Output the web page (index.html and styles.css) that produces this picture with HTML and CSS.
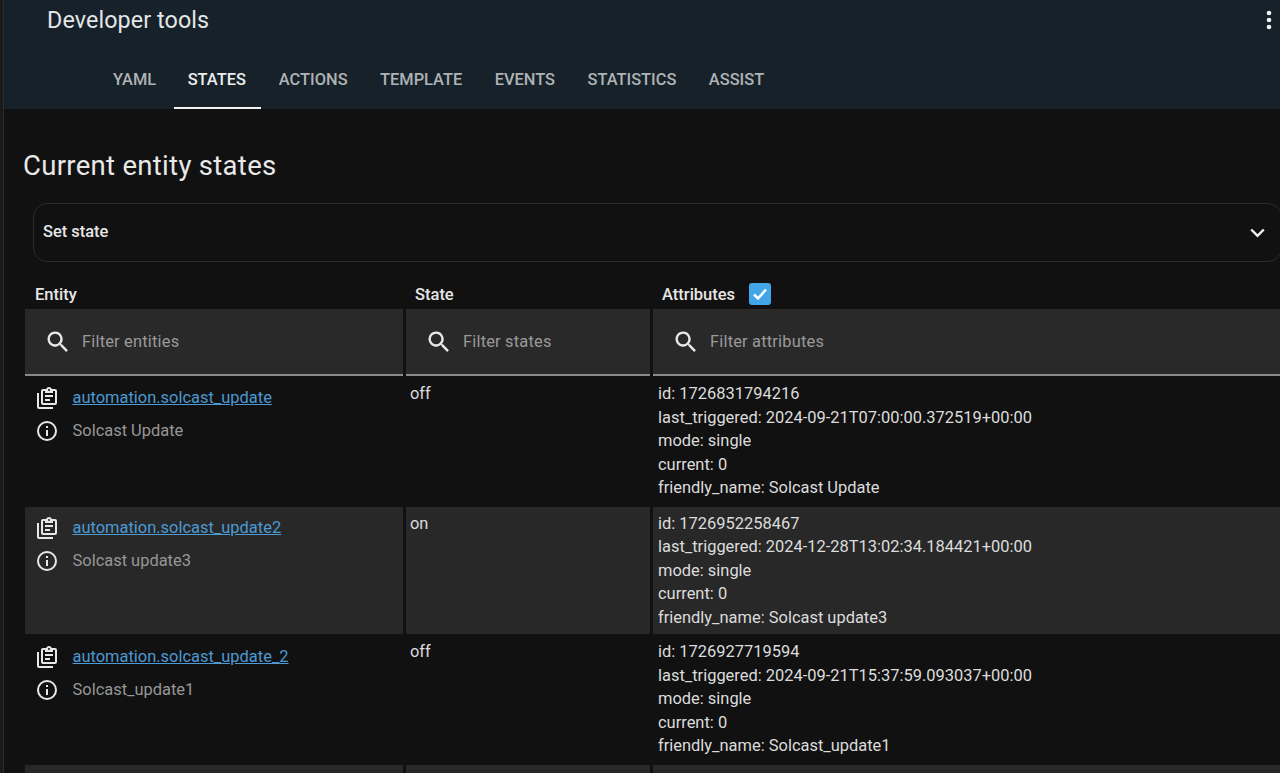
FILE: index.html
```html
<!DOCTYPE html>
<html lang="en">
<head>
<meta charset="utf-8">
<title>Developer tools</title>
<link rel="stylesheet" href="styles.css">
</head>
<body>
<div class="app">
  <div class="rail"></div>
  <div class="main">
    <header class="topbar">
      <div class="title-row">
        <h1 class="title">Developer tools</h1>
        <svg class="more" viewBox="0 0 6 20" width="6" height="20"><circle cx="3" cy="3" r="2.3"/><circle cx="3" cy="10" r="2.3"/><circle cx="3" cy="17" r="2.3"/></svg>
      </div>
      <nav class="tabs">
        <span class="tab">YAML</span>
        <span class="tab active">STATES</span>
        <span class="tab">ACTIONS</span>
        <span class="tab">TEMPLATE</span>
        <span class="tab">EVENTS</span>
        <span class="tab">STATISTICS</span>
        <span class="tab">ASSIST</span>
      </nav>
    </header>
    <section class="content">
      <h2 class="heading">Current entity states</h2>
      <div class="expander">
        <span class="expander-label">Set state</span>
        <svg class="chev" viewBox="0 0 15 10" width="15" height="10"><path d="M1.2 1.5 7.5 7.8l6.3-6.3" fill="none" stroke="#f2f2f2" stroke-width="2.4"/></svg>
      </div>
      <div class="table">
        <div class="th">Entity</div>
        <div class="th">State</div>
        <div class="th th-attr">Attributes
          <span class="check"><svg viewBox="0 0 22 22" width="22" height="22"><path d="M5 11.5l4 4 8-9" fill="none" stroke="#fff" stroke-width="2.5"/></svg></span>
        </div>

        <div class="filter"><svg class="search" viewBox="0 0 24 24" width="28" height="28"><path d="M9.5 3a6.5 6.5 0 0 1 4.94 10.73l.27.27h.79l5 5-1.5 1.5-5-5v-.79l-.27-.27A6.5 6.5 0 1 1 9.5 3m0 2a4.5 4.5 0 1 0 0 9 4.5 4.5 0 0 0 0-9z"/></svg><span>Filter entities</span></div>
        <div class="filter"><svg class="search" viewBox="0 0 24 24" width="28" height="28"><path d="M9.5 3a6.5 6.5 0 0 1 4.94 10.73l.27.27h.79l5 5-1.5 1.5-5-5v-.79l-.27-.27A6.5 6.5 0 1 1 9.5 3m0 2a4.5 4.5 0 1 0 0 9 4.5 4.5 0 0 0 0-9z"/></svg><span>Filter states</span></div>
        <div class="filter"><svg class="search" viewBox="0 0 24 24" width="28" height="28"><path d="M9.5 3a6.5 6.5 0 0 1 4.94 10.73l.27.27h.79l5 5-1.5 1.5-5-5v-.79l-.27-.27A6.5 6.5 0 1 1 9.5 3m0 2a4.5 4.5 0 1 0 0 9 4.5 4.5 0 0 0 0-9z"/></svg><span>Filter attributes</span></div>

        <div class="cell entity">
          <div class="line"><svg class="ico" viewBox="0 0 24 24" width="24" height="24"><path d="M4 7v14h14v2H4a2 2 0 0 1-2-2V7h2m16-4a2 2 0 0 1 2 2v12a2 2 0 0 1-2 2H8a2 2 0 0 1-2-2V5a2 2 0 0 1 2-2h3.18C11.6 1.84 12.7 1 14 1s2.4.84 2.82 2H20m-6 0a1 1 0 1 0 0 2 1 1 0 0 0 0-2m-4 4V5H8v12h12V5h-2v2h-8m0 2h8v2h-8V9m0 4h5v2h-5v-2z"/></svg><a class="link">automation.solcast_update</a></div>
          <div class="line"><svg class="ico" viewBox="0 0 24 24" width="24" height="24"><path d="M11 9h2V7h-2m1 13a8 8 0 1 1 0-16 8 8 0 0 1 0 16m0-18a10 10 0 1 0 0 20 10 10 0 0 0 0-20m-1 15h2v-6h-2v6z"/></svg><span class="name">Solcast Update</span></div>
        </div>
        <div class="cell state">off</div>
        <div class="cell attrs">id: 1726831794216<br>last_triggered: 2024-09-21T07:00:00.372519+00:00<br>mode: single<br>current: 0<br>friendly_name: Solcast Update</div>

        <div class="cell entity alt">
          <div class="line"><svg class="ico" viewBox="0 0 24 24" width="24" height="24"><path d="M4 7v14h14v2H4a2 2 0 0 1-2-2V7h2m16-4a2 2 0 0 1 2 2v12a2 2 0 0 1-2 2H8a2 2 0 0 1-2-2V5a2 2 0 0 1 2-2h3.18C11.6 1.84 12.7 1 14 1s2.4.84 2.82 2H20m-6 0a1 1 0 1 0 0 2 1 1 0 0 0 0-2m-4 4V5H8v12h12V5h-2v2h-8m0 2h8v2h-8V9m0 4h5v2h-5v-2z"/></svg><a class="link">automation.solcast_update2</a></div>
          <div class="line"><svg class="ico" viewBox="0 0 24 24" width="24" height="24"><path d="M11 9h2V7h-2m1 13a8 8 0 1 1 0-16 8 8 0 0 1 0 16m0-18a10 10 0 1 0 0 20 10 10 0 0 0 0-20m-1 15h2v-6h-2v6z"/></svg><span class="name">Solcast update3</span></div>
        </div>
        <div class="cell state alt">on</div>
        <div class="cell attrs alt">id: 1726952258467<br>last_triggered: 2024-12-28T13:02:34.184421+00:00<br>mode: single<br>current: 0<br>friendly_name: Solcast update3</div>

        <div class="cell entity entity-low">
          <div class="line"><svg class="ico" viewBox="0 0 24 24" width="24" height="24"><path d="M4 7v14h14v2H4a2 2 0 0 1-2-2V7h2m16-4a2 2 0 0 1 2 2v12a2 2 0 0 1-2 2H8a2 2 0 0 1-2-2V5a2 2 0 0 1 2-2h3.18C11.6 1.84 12.7 1 14 1s2.4.84 2.82 2H20m-6 0a1 1 0 1 0 0 2 1 1 0 0 0 0-2m-4 4V5H8v12h12V5h-2v2h-8m0 2h8v2h-8V9m0 4h5v2h-5v-2z"/></svg><a class="link">automation.solcast_update_2</a></div>
          <div class="line"><svg class="ico" viewBox="0 0 24 24" width="24" height="24"><path d="M11 9h2V7h-2m1 13a8 8 0 1 1 0-16 8 8 0 0 1 0 16m0-18a10 10 0 1 0 0 20 10 10 0 0 0 0-20m-1 15h2v-6h-2v6z"/></svg><span class="name">Solcast_update1</span></div>
        </div>
        <div class="cell state">off</div>
        <div class="cell attrs">id: 1726927719594<br>last_triggered: 2024-09-21T15:37:59.093037+00:00<br>mode: single<br>current: 0<br>friendly_name: Solcast_update1</div>

        <div class="cell alt stub"></div>
        <div class="cell alt stub"></div>
        <div class="cell alt stub"></div>
      </div>
    </section>
  </div>
</div>
</body>
</html>
```
FILE: styles.css
```css
* { box-sizing: border-box; }
html, body { margin: 0; height: 100%; overflow: hidden; background: #111111; }
body { font-family: Roboto, "Liberation Sans", sans-serif; color: #e3e3e3; }
.app { display: flex; width: 1280px; height: 773px; overflow: hidden; }
.rail { flex: 0 0 4px; background: #1a1a1a; border-right: 1px solid #2c2c2c; }
.main { flex: 1; min-width: 0; }
.topbar { height: 109px; background: #172129; display: flex; flex-direction: column; }
.title-row { height: 41px; padding: 0 8px 0 43px; display: flex; justify-content: space-between; align-items: flex-start; }
.title { margin: 6px 0 0; font-size: 23.3px; line-height: 28px; font-weight: 400; color: #e4e6e7; letter-spacing: 0.1px; }
.more { fill: #f1f1f1; margin-top: 10px; }
.tabs { display: flex; padding-left: 93px; height: 68px; }
.tab { padding: 0 16.5px 0 16px; font-size: 16.4px; font-weight: 500; line-height: 77px; color: #aeb3b6; letter-spacing: 0; }
.tab:first-child { padding-right: 16px; }
.tab.active { color: #eceeee; border-bottom: 2px solid #f2f2f2; height: 68px; margin: 0 2px 0 2px; padding: 0 15px 0 13.5px; }
.content { padding: 0 0 0 19px; }
.heading { margin: 0; padding-top: 42px; font-size: 27.5px; line-height: 30px; font-weight: 400; color: #e8e8e8; letter-spacing: 0.3px; height: 94px; }
.expander { margin-left: 10px; width: 1249px; height: 59px; border: 1px solid #2d2d2d; border-radius: 14px; display: flex; align-items: center; justify-content: space-between; padding: 0 16px 0 9px; font-size: 16.4px; font-weight: 500; color: #e6e6e6; }
.expander-label { margin-bottom: 2px; }
.table { margin: 22px 0 0 2px; display: grid; grid-template-columns: 378px 244px 640px; grid-template-rows: 25px 67px 131px 127px 131px 20px; column-gap: 3px; }
.th { font-size: 16.5px; font-weight: 500; color: #e6e6e6; padding-left: 10px; display: flex; align-items: center; height: 20px; }
.th:nth-child(2) { padding-left: 9px; }
.th-attr { gap: 14px; padding-left: 9px; }
.check { width: 22px; height: 22px; background: #42a5e8; border-radius: 3px; display: block; flex: none; }
.check svg { display: block; }
.filter { background: #292929; border-bottom: 2px solid #8a8a8a; display: flex; align-items: center; padding: 0 0 0 19px; gap: 10px; font-size: 16.4px; letter-spacing: 0.2px; color: #9a9a9a; }
.search { fill: #e8e8e8; flex: none; }
.cell { font-size: 16.45px; line-height: 23.5px; padding: 6px 5px 0; color: #dcdcdc; }
.cell.alt { padding-top: 4.5px; background: #282828; }
.state { padding-left: 4px; }
.cell.entity { padding: 10px 0 0 10px; display: flex; flex-direction: column; gap: 9px; }
.cell.entity.alt { padding-top: 9px; }
.cell.entity-low { padding-top: 11px; }
.line { display: flex; align-items: center; gap: 13.5px; height: 24px; }
.ico { fill: #e8e8e8; flex: none; }
.link { color: #4b9ad4; text-decoration: underline; }
.name { color: #979797; }
.cell.stub { padding: 0; }
```
